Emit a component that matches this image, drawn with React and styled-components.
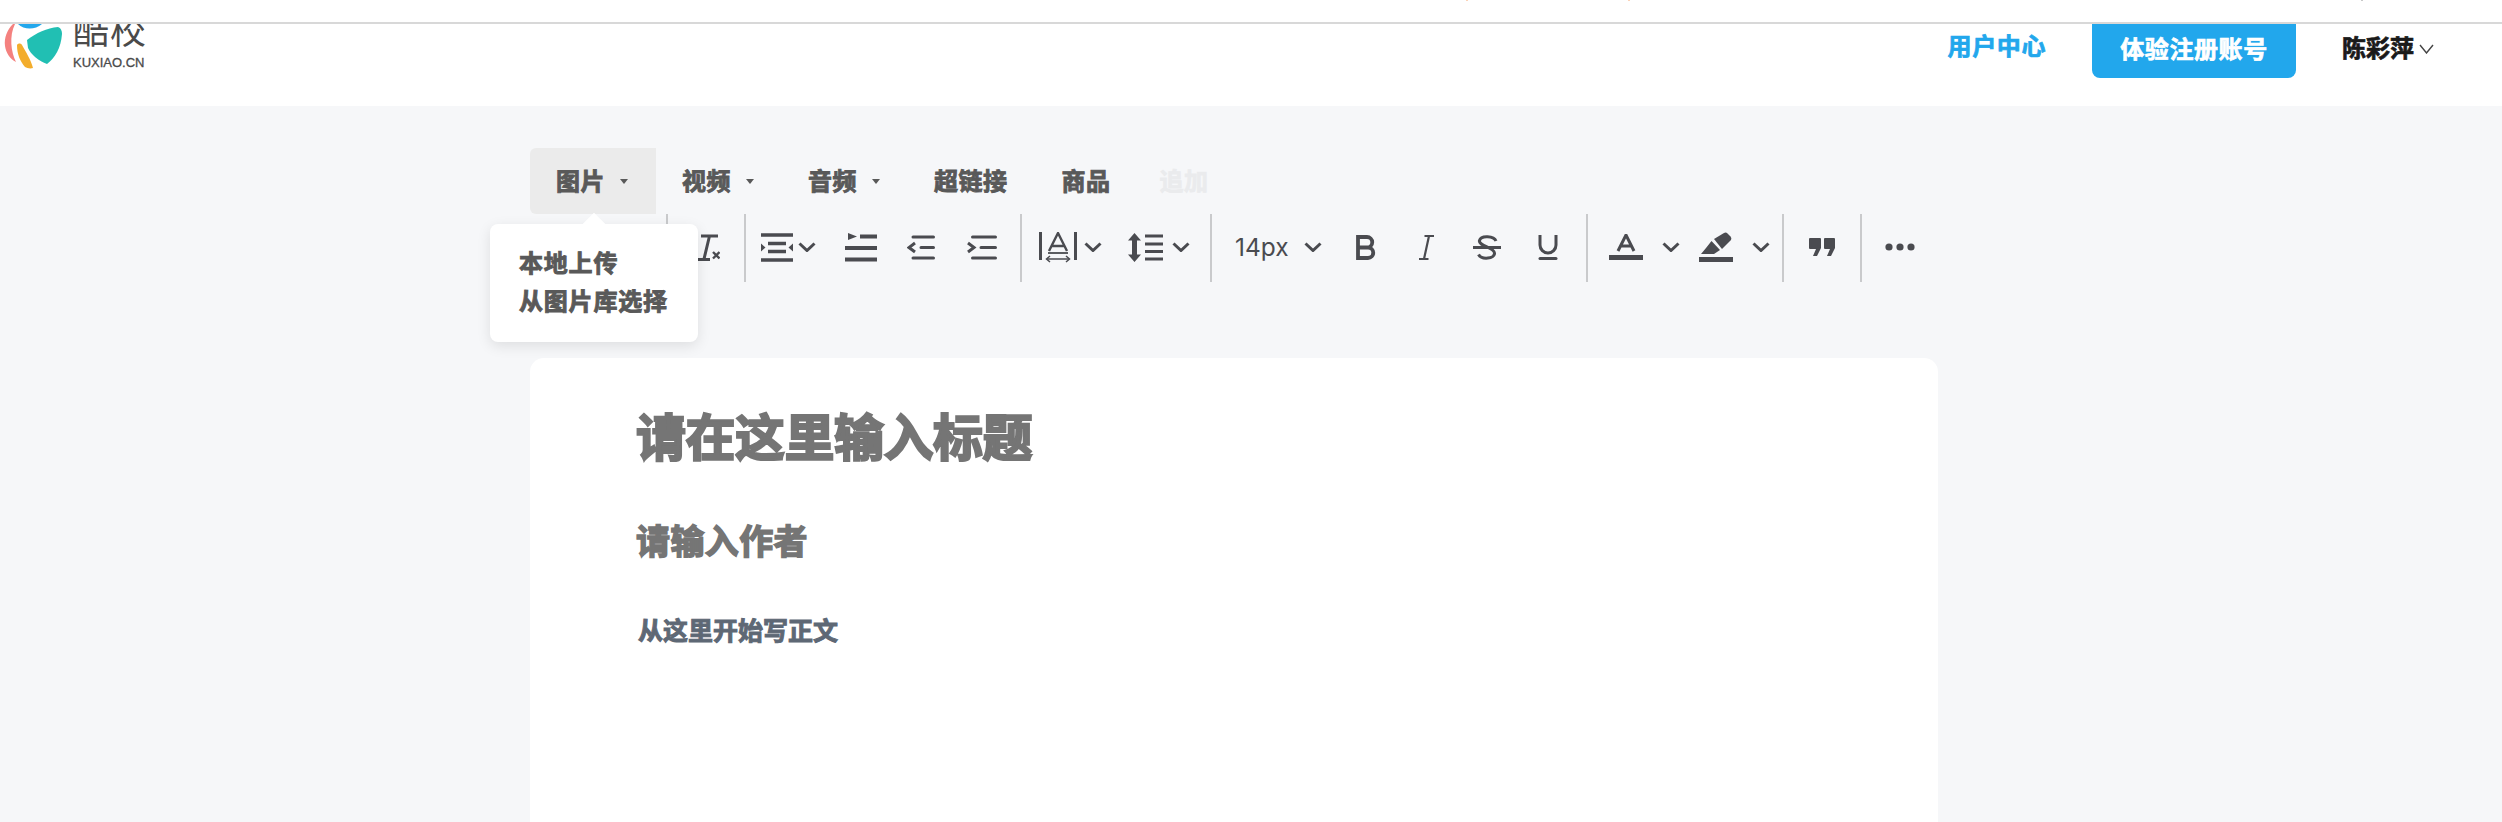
import React from 'react';
import styled, { createGlobalStyle } from 'styled-components';

const GlobalStyle = createGlobalStyle`
  html, body {
    margin: 0;
    padding: 0;
    background: #f6f7f9;
    font-family: "Liberation Sans", "Noto Sans CJK SC", sans-serif;
    overflow: hidden;
  }
`;

const Page = styled.div`
  position: relative;
  width: 2502px;
  height: 822px;
  overflow: hidden;
`;

const TopStrip = styled.div`
  height: 22px;
  background: #fff;
  border-bottom: 2px solid #d8d8d8;
`;

// tiny leftovers of a cropped line at the very top of the screenshot
const Speck = styled.i`
  position: absolute;
  top: 0;
  left: ${p => p.$x}px;
  width: 2px;
  height: 1px;
  background: ${p => p.$color};
`;

const Header = styled.header`
  height: 82px;
  background: #fff;
  display: flex;
  justify-content: space-between;
  overflow: hidden;
`;

const Logo = styled.div`
  display: flex;
  gap: 5px;
  height: 60px;
`;

const LogoText = styled.div`
  display: flex;
  flex-direction: column;
  color: #4a4a4a;
`;

const LogoName = styled.div`
  font-size: 36px;
  line-height: 36px;
  letter-spacing: 1px;
  margin-top: -10px;
  font-weight: 400;
`;

const LogoSub = styled.div`
  font-size: 13px;
  line-height: 14px;
  margin-top: 6px;
  -webkit-text-stroke: 0.3px #4a4a4a;
`;

const HeaderRight = styled.div`
  display: flex;
  align-items: flex-start;
  margin-right: 68px;
`;

const UserLink = styled.a`
  font-size: 24px;
  line-height: 30px;
  letter-spacing: 0.6px;
  font-weight: 700;
  color: #22a7ec;
  -webkit-text-stroke: 0.7px #22a7ec;
  margin-top: 8px;
  margin-right: 46px;
`;

const SignupButton = styled.button`
  width: 204px;
  height: 54px;
  border: 0;
  padding: 0 0 8px;
  border-radius: 0 0 8px 8px;
  background: #22a7ec;
  color: #fff;
  font: 700 24px "Liberation Sans", "Noto Sans CJK SC", sans-serif;
  letter-spacing: 0.6px;
  -webkit-text-stroke: 0.7px #fff;
  margin-right: 46px;
`;

const UserName = styled.div`
  display: flex;
  align-items: center;
  gap: 5px;
  margin-top: 10px;
  font-size: 24px;
  line-height: 30px;
  font-weight: 700;
  color: #1a1a1a;
  -webkit-text-stroke: 0.7px #1a1a1a;
`;

const EditorWrap = styled.div`
  position: relative;
  width: 1408px;
  margin-left: 530px;
  padding-top: 42px;
`;

const Tabs = styled.div`
  display: flex;
  height: 66px;
`;

const Tab = styled.div`
  display: flex;
  align-items: center;
  gap: 15px;
  padding: 0 28px 4px 26px;
  margin-left: ${p => (p.$faded ? -5 : 0)}px;
  font-size: 24px;
  letter-spacing: 0.5px;
  font-weight: 700;
  color: #595959;
  -webkit-text-stroke: 0.9px #595959;
  background: ${p => (p.$active ? '#ebebeb' : 'transparent')};
  border-radius: ${p => (p.$active ? '6px 0 0 6px' : '0')};
  opacity: ${p => (p.$faded ? 0.07 : 1)};
`;

const Caret = styled.span`
  width: 0;
  height: 0;
  border: 4px solid transparent;
  border-top: 5px solid #595959;
  border-bottom: 0;
  margin-top: 4px;
`;

const Toolbar = styled.div`
  display: flex;
  align-items: center;
  height: 68px;
  color: #4a4b50;
`;

const Divider = styled.span`
  width: 2px;
  height: 68px;
  background: #c9cacc;
  flex: none;
  margin-left: ${p => p.$left || 0}px;
`;

const ToolIcon = styled.span`
  display: flex;
  align-items: center;
  justify-content: space-between;
  flex: none;
  width: ${p => p.$w}px;
  height: 66px;
  margin-bottom: 2px;
  margin-left: ${p => p.$left || 0}px;
`;

const SizeLabel = styled.span`
  font-family: Inter, "Liberation Sans", sans-serif;
  font-size: 24.5px;
  color: #4a4b50;
`;

const Popup = styled.div`
  position: absolute;
  left: -40px;
  top: 118px;
  width: 208px;
  height: 118px;
  box-sizing: border-box;
  padding: 21px 29px;
  background: #fff;
  border-radius: 8px;
  box-shadow: 0 4px 14px rgba(0, 0, 0, 0.1);
  z-index: 2;
  &::before {
    content: '';
    position: absolute;
    left: 96px;
    top: -8px;
    width: 16px;
    height: 16px;
    background: #fff;
    transform: rotate(45deg);
  }
`;

const PopupItem = styled.div`
  position: relative;
  font-size: 24px;
  letter-spacing: 0.8px;
  line-height: 38px;
  font-weight: 700;
  color: #595959;
  -webkit-text-stroke: 0.9px #595959;
  white-space: nowrap;
`;

const Card = styled.div`
  margin-top: 76px;
  height: 500px;
  background: #fff;
  border-radius: 14px 14px 0 0;
  padding: 51px 0 0 106px;
`;

const Title = styled.div`
  font-size: 50px;
  line-height: 60px;
  letter-spacing: -0.5px;
  font-weight: 700;
  color: #757575;
  -webkit-text-stroke: 2.2px #757575;
`;

const Author = styled.div`
  margin-top: 51px;
  font-size: 34px;
  line-height: 44px;
  letter-spacing: 0.4px;
  font-weight: 700;
  color: #757575;
  -webkit-text-stroke: 1.5px #757575;
`;

const Body = styled.div`
  margin-top: 50px;
  padding-left: 2px;
  font-size: 25px;
  line-height: 34px;
  font-weight: 700;
  color: #5e6875;
  -webkit-text-stroke: 1px #5e6875;
`;

const C = '#4a4b50';

const Svg = ({ w, h, children }) => (
  <svg width={w} height={h} viewBox={`0 0 ${w} ${h}`} fill="none">{children}</svg>
);

const Chevron = () => (
  <Svg w={18} h={10}>
    <path d="M1.5 1.5L9 8.5l7.5-7" stroke={C} strokeWidth="3" />
  </Svg>
);

const App = () => (
  <Page>
    <GlobalStyle />
    <TopStrip />
    <Speck $x={1466} $color="#fbd3b8" />
    <Speck $x={1628} $color="#fbd3b8" />
    <Speck $x={2361} $color="#c8c8c8" />
    <Header>
      <Logo>
        <svg width="68" height="46" viewBox="0 0 68 46">
          <path d="M18 0C24 6 35 6 42 0z" fill="#22a7ec" />
          <path d="M13 0C7 6 4 14 5 22C6 29 10 35 16 38C11 28 9 12 15 0z" fill="#f4817f" />
          <path d="M27 16C36 9 47 4 58 3C61 4 62 7 62 10C61 24 55 34 47 40C39 37 31 31 28 24z" fill="#21bfb3" />
          <path d="M17 21C18 19 21 19 22 21C26 28 31 36 33 44C30 45 27 44 25 43C20 37 17 30 17 21z" fill="#f3ad2c" />
        </svg>
        <LogoText>
          <LogoName>酷校</LogoName>
          <LogoSub>KUXIAO.CN</LogoSub>
        </LogoText>
      </Logo>
      <HeaderRight>
        <UserLink>用户中心</UserLink>
        <SignupButton>体验注册账号</SignupButton>
        <UserName>
          陈彩萍
          <Svg w={15} h={10}><path d="M1 1l6.5 8L14 1" stroke="#444" strokeWidth="1.4" /></Svg>
        </UserName>
      </HeaderRight>
    </Header>

    <EditorWrap>
      <Tabs>
        <Tab $active>图片<Caret /></Tab>
        <Tab>视频<Caret /></Tab>
        <Tab>音频<Caret /></Tab>
        <Tab>超链接</Tab>
        <Tab>商品</Tab>
        <Tab $faded>追加</Tab>
      </Tabs>
      <Popup>
        <PopupItem>本地上传</PopupItem>
        <PopupItem>从图片库选择</PopupItem>
      </Popup>
      <Toolbar>
        <Divider $left={136} />
        <ToolIcon $w={22} $left={30}>
          <Svg w={22} h={27}>
            <path d="M3 2h17M11.5 2L6 25M0 25.5h12" stroke={C} strokeWidth="3" />
            <path d="M15 18l6.5 6.500M21.500 18L15 24.500" stroke={C} strokeWidth="2.400" />
          </Svg>
        </ToolIcon>
        <Divider $left={24} />
        <ToolIcon $w={55} $left={15}>
          <Svg w={32} h={29}>
            <path d="M0 2h32M7 10.500h18M7 18.500h18M0 27h32" stroke={C} strokeWidth="3.400" />
            <path d="M0 10.500l4.500 4-4.500 4zM32 10.500l-4.500 4 4.500 4z" fill={C} />
          </Svg>
          <Chevron />
        </ToolIcon>
        <ToolIcon $w={32} $left={29}>
          <Svg w={32} h={29}>
            <path d="M3 0l9 3.500-9 3.500z" fill={C} />
            <path d="M15 3.500h17M0 15h32M0 26.500h32" stroke={C} strokeWidth="4" />
          </Svg>
        </ToolIcon>
        <ToolIcon $w={28} $left={30}>
          <Svg w={28} h={25}>
            <path d="M6 2h20.500M14 12.500h12.500M6 23h20.500" stroke={C} strokeWidth="3" strokeLinecap="round" />
            <path d="M8 8l-6 4.500 6 4.500" stroke={C} strokeWidth="3" />
          </Svg>
        </ToolIcon>
        <ToolIcon $w={30} $left={32}>
          <Svg w={30} h={25}>
            <path d="M5.500 2h23M14 12.500h14.500M5.500 23h23" stroke={C} strokeWidth="3" strokeLinecap="round" />
            <path d="M1 8l6 4.500L1 17" stroke={C} strokeWidth="3" />
          </Svg>
        </ToolIcon>
        <Divider $left={23} />
        <ToolIcon $w={63} $left={17}>
          <Svg w={38} h={31}>
            <path d="M1.500 0v28M36.500 0v28" stroke={C} strokeWidth="3" />
            <path d="M10 19L19 1l9 18M12.500 14h13" stroke={C} strokeWidth="2.400" />
            <path d="M9 21h20" stroke={C} strokeWidth="1.800" />
            <path d="M8 27h22" stroke={C} strokeWidth="1.500" />
            <path d="M11 24l-3.500 3 3.500 3M27 24l3.500 3-3.500 3" stroke={C} strokeWidth="1.500" />
          </Svg>
          <Chevron />
        </ToolIcon>
        <ToolIcon $w={62} $left={26}>
          <Svg w={35} h={29}>
            <path d="M6.500 0l6.500 7.500H9v14h4l-6.500 7.500L0 21.500h4v-14H0z" fill={C} />
            <path d="M17 3h18M17 11h18M17 18.500h18M17 26h18" stroke={C} strokeWidth="3" />
          </Svg>
          <Chevron />
        </ToolIcon>
        <Divider $left={20} />
        <ToolIcon $w={87} $left={23}>
          <SizeLabel>14px</SizeLabel>
          <Chevron />
        </ToolIcon>
        <ToolIcon $w={20} $left={34}>
          <Svg w={20} h={25}>
            <path d="M2 2h9a5 5 0 010 10.500H2h10a5.200 5.200 0 010 10.500H2z" stroke={C} strokeWidth="3.800" />
          </Svg>
        </ToolIcon>
        <ToolIcon $w={15} $left={43}>
          <Svg w={15} h={25}>
            <path d="M5.500 1H15M0 24h9.500M10 1L5 24" stroke={C} strokeWidth="2.200" />
          </Svg>
        </ToolIcon>
        <ToolIcon $w={28} $left={39}>
          <Svg w={28} h={25}>
            <path d="M0 12.500h28" stroke={C} strokeWidth="3" />
            <path d="M23 6C21 1 8 0 6.500 5.500 5 11 21 12 21.500 18c.5 6-13 7-16 1.500" stroke={C} strokeWidth="3" />
          </Svg>
        </ToolIcon>
        <ToolIcon $w={20} $left={37}>
          <Svg w={20} h={25}>
            <path d="M2 0v10a8 8 0 0016 0V0" stroke={C} strokeWidth="3" />
            <path d="M2 23.500h16" stroke={C} strokeWidth="3" strokeLinecap="round" />
          </Svg>
        </ToolIcon>
        <Divider $left={28} />
        <ToolIcon $w={34} $left={21}>
          <Svg w={34} h={26}>
            <path d="M9 17L17 1l8 16M11.500 12h11" stroke={C} strokeWidth="3" />
            <path d="M0 23.500h34" stroke={C} strokeWidth="5" />
          </Svg>
        </ToolIcon>
        <ToolIcon $w={18} $left={19}><Chevron /></ToolIcon>
        <ToolIcon $w={34} $left={19}>
          <Svg w={34} h={30}>
            <path d="M15 7L25 1q2-1 3.500.5l3 3q1.500 1.500.5 3.500L23 17z" fill={C} />
            <path d="M12.500 9L21 18l-6 4H2l5-6z" fill={C} />
            <path d="M0 27.500h34" stroke={C} strokeWidth="5" />
          </Svg>
        </ToolIcon>
        <ToolIcon $w={18} $left={19}><Chevron /></ToolIcon>
        <Divider $left={12} />
        <ToolIcon $w={26} $left={25}>
          <Svg w={26} h={18}>
            <path d="M1 0h10q1 0 1 1v9l-4 8H4l3-7H1q-1 0-1-1V1q0-1 1-1zM15 0h10q1 0 1 1v9l-4 8h-4l3-7h-5q-1 0-1-1V1q0-1 1-1z" fill={C} />
          </Svg>
        </ToolIcon>
        <Divider $left={25} />
        <ToolIcon $w={30} $left={23}>
          <Svg w={30} h={8}>
            <circle cx="4" cy="4" r="3.600" fill={C} />
            <circle cx="15" cy="4" r="3.600" fill={C} />
            <circle cx="26" cy="4" r="3.600" fill={C} />
          </Svg>
        </ToolIcon>
      </Toolbar>
      <Card>
        <Title>请在这里输入标题</Title>
        <Author>请输入作者</Author>
        <Body>从这里开始写正文</Body>
      </Card>
    </EditorWrap>
  </Page>
);

export default App;
